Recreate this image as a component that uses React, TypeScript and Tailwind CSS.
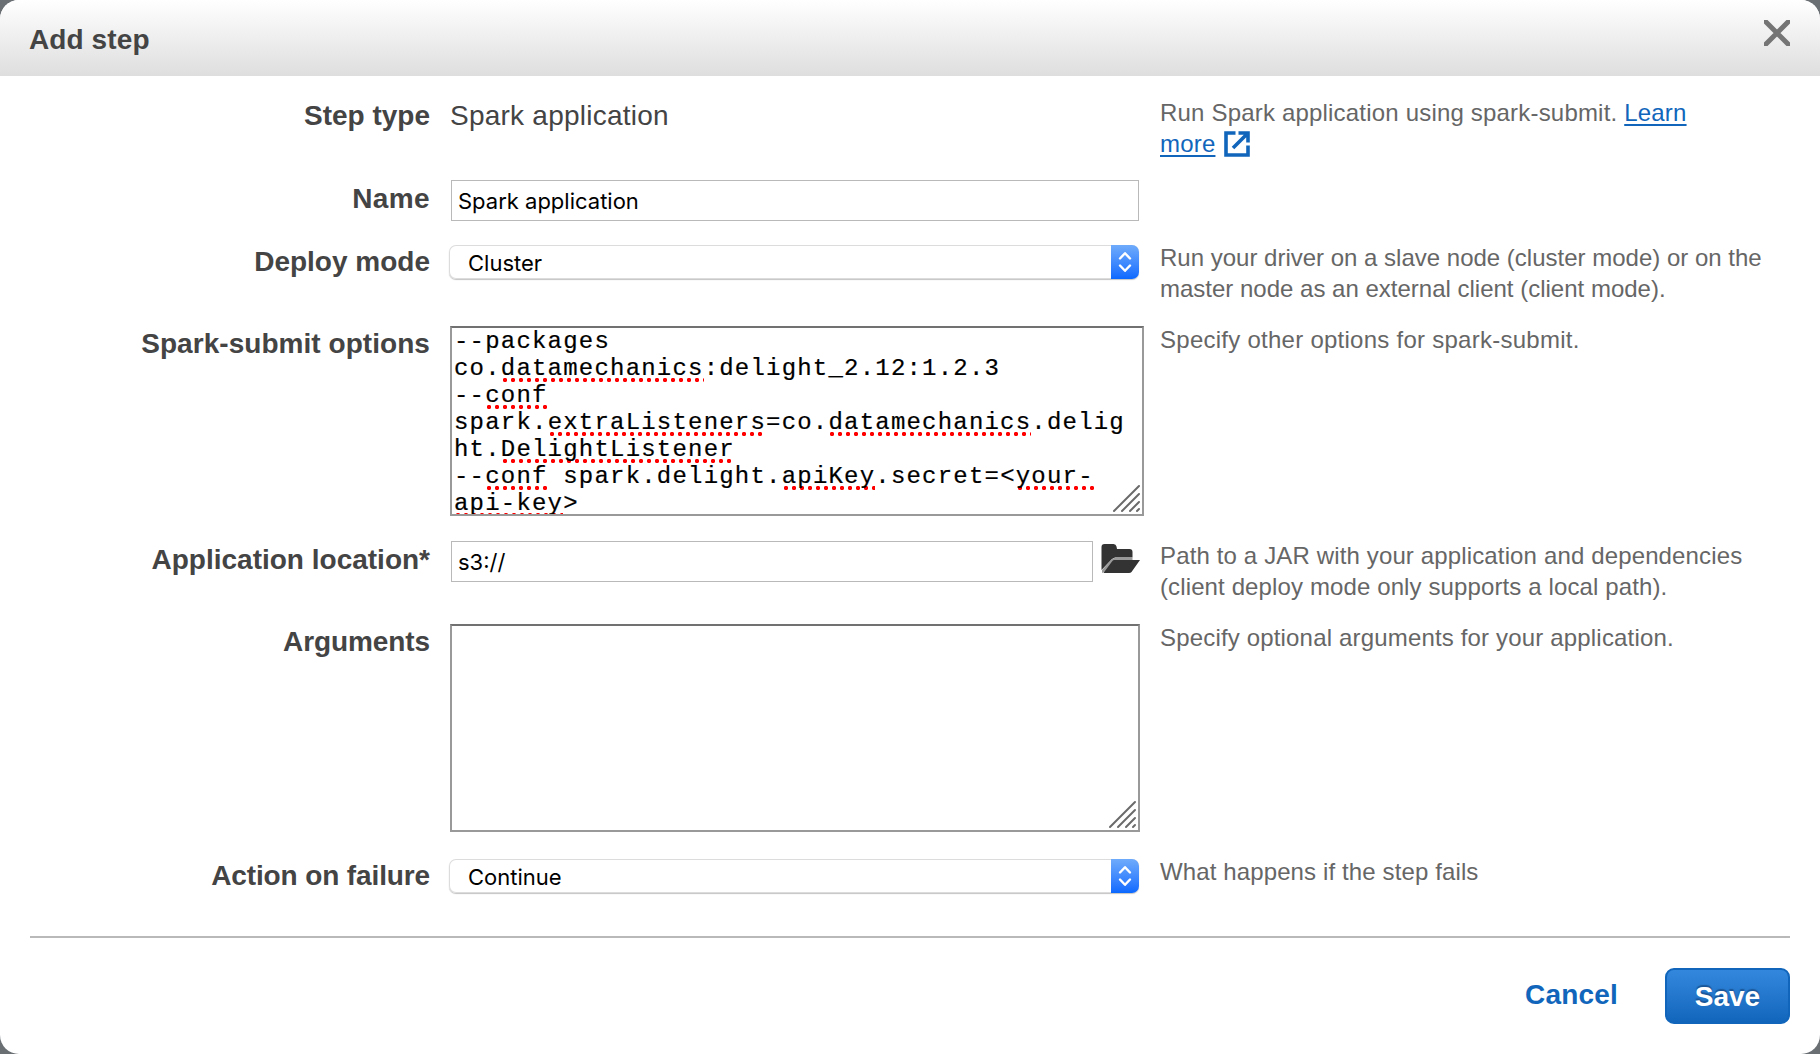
import React from "react";

const labelBase =
  "w-[430px] shrink-0 text-right text-[28px] leading-[34px] font-bold whitespace-nowrap text-[#444444]";
const helpBase =
  "ml-auto w-[660px] shrink-0 text-[24px] leading-[31px] whitespace-nowrap text-[#666666]";

function Chevrons() {
  return (
    <span className="flex h-full w-[28px] items-center justify-center rounded-r-[7px] bg-linear-to-b from-[#6fabfb] to-[#0a68ff]">
      <svg width="14" height="22" viewBox="0 0 14 22" fill="none" stroke="#fff" strokeWidth="2.4" strokeLinecap="round" strokeLinejoin="round">
        <path d="M2 7.500 7 2.200l5 5.300M2 14.500l5 5.300 5-5.300" />
      </svg>
    </span>
  );
}

function Select({ value }: { value: string }) {
  return (
    <div className="ml-[19px] flex h-[34px] w-[690px] shrink-0 items-center justify-between rounded-[7px] bg-white shadow-[inset_0_0_0_1px_#dcdcdc,0_1px_1px_#c4c4c4]">
      <span className="pt-[1px] pl-[19px] font-[Inter] text-[22px] leading-[30px] text-black">{value}</span>
      <Chevrons />
    </div>
  );
}

function Resizer() {
  return (
    <svg className="absolute right-[1px] bottom-[1px]" width="29" height="29" viewBox="0 0 29 29" stroke="#6a6a6a" strokeWidth="2" strokeLinecap="round">
      <path d="M2 27 27 2M10 27 27 10M18 27l9-9M25 27l2-2" />
    </svg>
  );
}

function Miss({ children }: { children: React.ReactNode }) {
  return (
    <span className="bg-[radial-gradient(circle_at_4px_2px,#ff0000_1.8px,transparent_2.5px)] bg-[length:8px_4px] bg-bottom-left bg-repeat-x">
      {children}
    </span>
  );
}

export default function App() {
  return (
    <div className="h-[1054px] w-[1820px] overflow-hidden bg-[#6a6f74] font-['Liberation_Sans',sans-serif]">
      <div className="flex h-full flex-col overflow-hidden rounded-[19px] bg-white">
        <header className="flex h-[76px] shrink-0 items-start justify-between bg-linear-to-b from-white to-[#dedede] pr-[30px] pl-[30px]">
          <h1 className="mt-[23px] -ml-[1px] text-[28px] leading-[34px] font-bold tracking-[0.1px] text-[#444444]">Add step</h1>
          <svg className="mt-[20px]" width="26" height="26" viewBox="0 0 26 26" stroke="#757575" strokeWidth="5">
            <path d="M0 0 26 26M26 0 0 26" />
          </svg>
        </header>

        <main className="flex flex-col pt-[22px]">
          <div className="flex h-[82px] items-start">
            <div className={`${labelBase} mt-[1px]`}>Step type</div>
            <div className="mt-[1px] ml-[20px] text-[28px] leading-[34px] tracking-[0.24px] text-[#444444]">Spark application</div>
            <div className={`${helpBase} -mt-[1px] tracking-[0.19px]`}>
              Run Spark application using spark-submit.{" "}
              <a className="text-[#1166bb] underline decoration-[1.5px] underline-offset-[3px]">Learn</a>
              <div className="flex items-center">
                <a className="text-[#1166bb] underline decoration-[1.5px] underline-offset-[3px]">more</a>
                <svg className="ml-[9px]" width="26" height="26" viewBox="0 0 26 26" fill="none" stroke="#1166bb" strokeWidth="3.6">
                  <path d="M11.500 2H2v22h22v-9.500M14.500 2H24v9.500M24 2 9 17" />
                </svg>
              </div>
            </div>
          </div>

          <div className="flex h-[65px] items-start">
            <div className={`${labelBase} mt-[2px] tracking-[0.4px]`}>Name</div>
            <div className="ml-[21px] h-[41px] w-[688px] border border-[#b9b9b9] pt-[5px] pl-[6px] font-[Inter] text-[22px] leading-[31px] text-black">
              Spark application
            </div>
          </div>

          <div className="flex h-[81px] items-start">
            <div className={labelBase}>Deploy mode</div>
            <Select value="Cluster" />
            <div className={`${helpBase} -mt-[3px]`}>
              Run your driver on a slave node (cluster mode) or on the
              <br />
              master node as an external client (client mode).
            </div>
          </div>

          <div className="flex h-[215px] items-start">
            <div className={`${labelBase} mt-[1px] tracking-[0.05px]`}>Spark-submit options</div>
            <div className="relative ml-[20px] h-[190px] w-[694px] shrink-0 overflow-hidden border-2 border-[#999999] border-t-[#717171] pl-[2px] font-['Liberation_Mono',monospace] text-[24px] leading-[27px] tracking-[1.2px] whitespace-nowrap text-black [-webkit-text-stroke:0.2px_black]">
              --packages
              <br />
              co.<Miss>datamechanics</Miss>:delight_2.12:1.2.3
              <br />
              --<Miss>conf</Miss>
              <br />
              spark.<Miss>extraListeners</Miss>=co.<Miss>datamechanics</Miss>.delig
              <br />
              ht.<Miss>DelightListener</Miss>
              <br />
              --<Miss>conf</Miss> spark.delight.<Miss>apiKey</Miss>.secret=&lt;<Miss>your-</Miss>
              <br />
              <Miss>api-key</Miss>&gt;
              <Resizer />
            </div>
            <div className={`${helpBase} -mt-[2px] tracking-[0.26px]`}>Specify other options for spark-submit.</div>
          </div>

          <div className="flex h-[83px] items-start">
            <div className={`${labelBase} mt-[2px]`}>Application location*</div>
            <div className="ml-[21px] h-[41px] w-[642px] shrink-0 border border-[#b9b9b9] pt-[5px] pl-[6px] font-[Inter] text-[22px] leading-[31px] text-black">
              s3://
            </div>
            <svg className="mt-[2px] ml-[8px] shrink-0" width="39" height="31" viewBox="0 0 39 31">
              <path d="M0.500 27V4Q0.500 1 3.500 1h9q2.500 0 3 2.500l0.500 2.500h12.500q3 0 3 3v5.500H14l-3 1.500z" fill="#333" />
              <path d="M1 30V27L10.500 16.500 14 14.800H31.500V17z" fill="#9a9a9a" />
              <path d="M13.500 17H39L30.500 29Q29.700 30 28 30H2.500L11 18.400Q12 17 13.500 17z" fill="#333" />
            </svg>
            <div className={`${helpBase} -mt-[1px]`}>
              <span className="tracking-[0.14px]">Path to a JAR with your application and dependencies</span>
              <br />
              <span className="tracking-[0.12px]">(client deploy mode only supports a local path).</span>
            </div>
          </div>

          <div className="flex h-[235px] items-start">
            <div className={`${labelBase} mt-[1px] tracking-[-0.1px]`}>Arguments</div>
            <div className="relative ml-[20px] h-[208px] w-[690px] shrink-0 border-2 border-[#999999] border-t-[#717171]">
              <Resizer />
            </div>
            <div className={`${helpBase} -mt-[2px] tracking-[0.17px]`}>Specify optional arguments for your application.</div>
          </div>

          <div className="flex h-[77px] items-start">
            <div className={`${labelBase} tracking-[-0.12px]`}>Action on failure</div>
            <Select value="Continue" />
            <div className={`${helpBase} -mt-[3px] tracking-[0.12px]`}>What happens if the step fails</div>
          </div>
        </main>

        <footer className="mx-[30px] flex items-start justify-end border-t-2 border-[#b9b9b9] pt-[30px]">
          <button className="mt-[10px] mr-[47px] text-[28px] leading-[34px] font-bold tracking-[0.2px] text-[#1166bb]">Cancel</button>
          <button className="h-[56px] w-[125px] rounded-[9px] border-2 border-[#1166bb] bg-linear-to-b from-[#3388dd] to-[#1166bb] pt-[1px] text-[28px] leading-[34px] font-bold text-white [text-shadow:0_-2px_1px_#1a5799]">
            Save
          </button>
        </footer>
      </div>
    </div>
  );
}
